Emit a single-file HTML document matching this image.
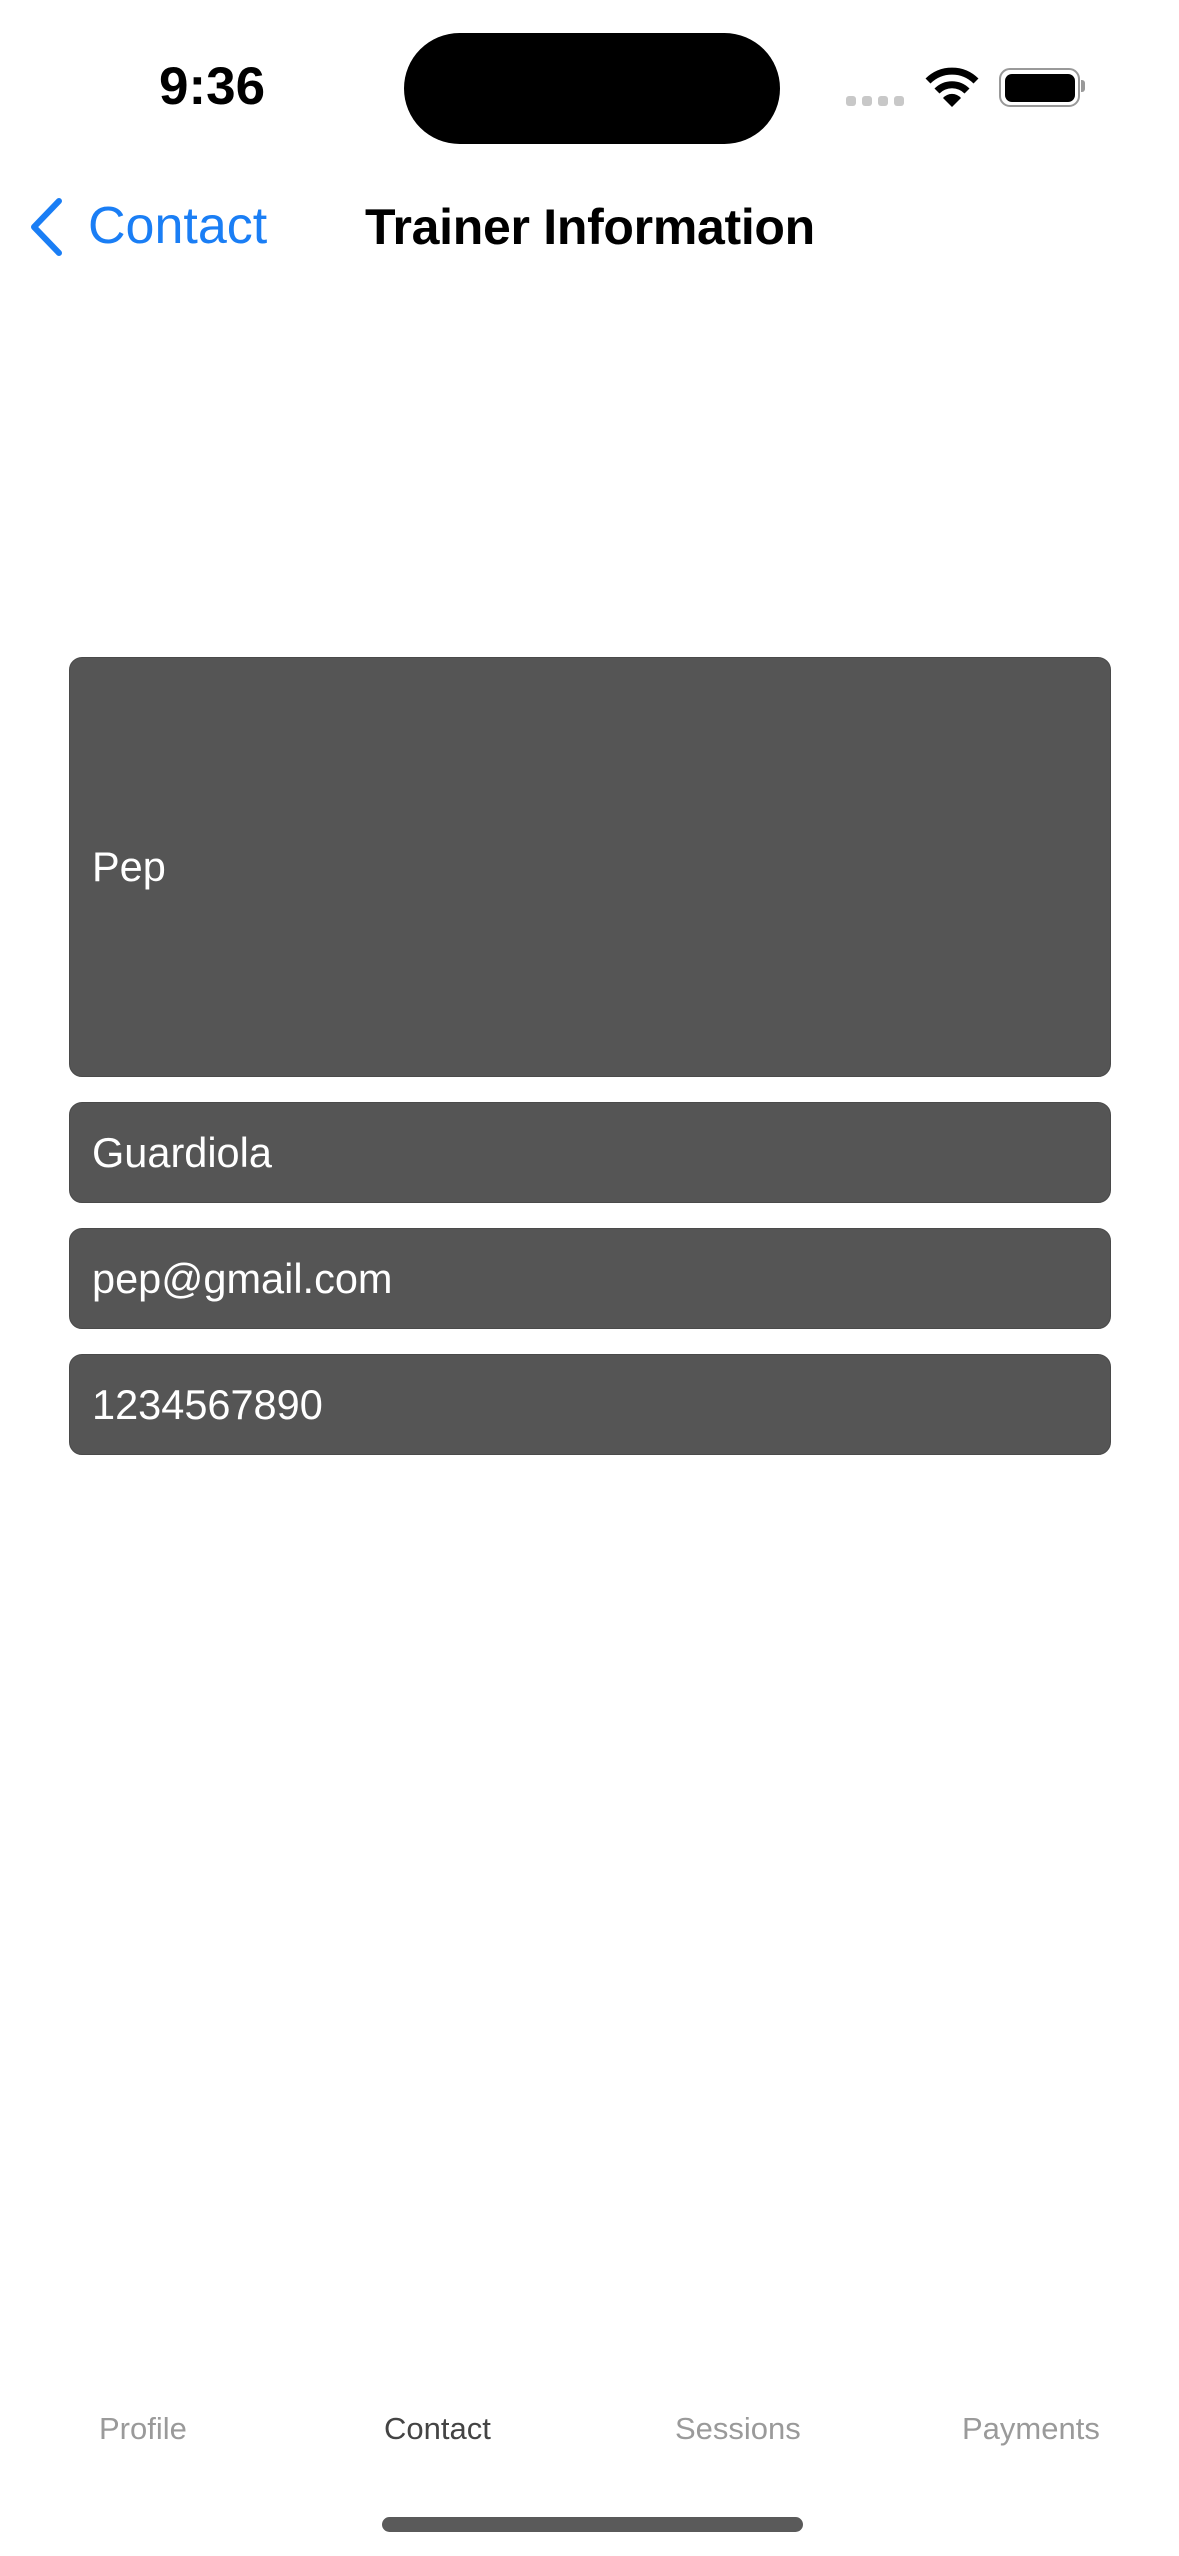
<!DOCTYPE html>
<html><head><meta charset="utf-8"><style>
html,body{margin:0;padding:0;background:#fff;}
body{width:1179px;height:2556px;position:relative;overflow:hidden;font-family:"Liberation Sans",sans-serif;}
.a{position:absolute;}
.f{position:absolute;left:69px;width:1042px;background:#555;border-radius:13px;color:#fff;font-size:41.5px;box-sizing:border-box;padding-left:22px;display:flex;align-items:center;border:1.5px solid #4a4a4a;}
.t{position:absolute;top:2409px;font-size:31px;color:#9a9a9a;line-height:40px;}
</style></head><body>
<div class="a" style="left:159px;top:57px;font-size:53px;font-weight:bold;line-height:60px;">9:36</div>
<div class="a" style="left:404px;top:33px;width:376px;height:111px;background:#000;border-radius:56px;"></div>
<div class="a" style="left:846px;top:96px;width:10px;height:10px;border-radius:3px;background:#c8c8c8"></div>
<div class="a" style="left:862px;top:96px;width:10px;height:10px;border-radius:3px;background:#c8c8c8"></div>
<div class="a" style="left:878px;top:96px;width:10px;height:10px;border-radius:3px;background:#c8c8c8"></div>
<div class="a" style="left:894px;top:96px;width:10px;height:10px;border-radius:3px;background:#c8c8c8"></div>
<svg class="a" style="left:925px;top:67px" width="54" height="42" viewBox="0 0 54 42">
<path d="M3 14 A34 34 0 0 1 51 14" stroke="#000" stroke-width="7" fill="none"/>
<path d="M12 24 A21 21 0 0 1 42 24" stroke="#000" stroke-width="7" fill="none"/>
<path d="M18 31 L27 40 L36 31 A12 12 0 0 0 18 31Z" fill="#000"/>
</svg>
<div class="a" style="left:999px;top:68px;width:77px;height:35px;border:2.5px solid #999;border-radius:11px;"></div>
<div class="a" style="left:1005px;top:74px;width:70px;height:28px;background:#000;border-radius:7px;"></div>
<div class="a" style="left:1081px;top:80px;width:4px;height:12px;background:#999;border-radius:0 3px 3px 0;"></div>
<svg class="a" style="left:26px;top:196px" width="40" height="62" viewBox="0 0 40 62"><path d="M33 5 L8 31 L33 57" stroke="#1a7ef5" stroke-width="6" fill="none" stroke-linecap="round" stroke-linejoin="round"/></svg>
<div class="a" style="left:88px;top:197px;font-size:52px;color:#1a7ef5;line-height:58px;">Contact</div>
<div class="a" style="left:365px;top:198px;font-size:50px;font-weight:bold;color:#000;line-height:58px;letter-spacing:-0.3px;">Trainer Information</div>
<div class="f" style="top:657px;height:420px;">Pep</div>
<div class="f" style="top:1102px;height:101px;">Guardiola</div>
<div class="f" style="top:1228px;height:101px;">pep@gmail.com</div>
<div class="f" style="top:1354px;height:101px;">1234567890</div>
<div class="t" style="left:99px;">Profile</div>
<div class="t" style="left:384px;color:#444;">Contact</div>
<div class="t" style="left:675px;">Sessions</div>
<div class="t" style="left:962px;">Payments</div>
<div class="a" style="left:382px;top:2517px;width:421px;height:15px;background:#5a5a5a;border-radius:8px;"></div>
</body></html>
